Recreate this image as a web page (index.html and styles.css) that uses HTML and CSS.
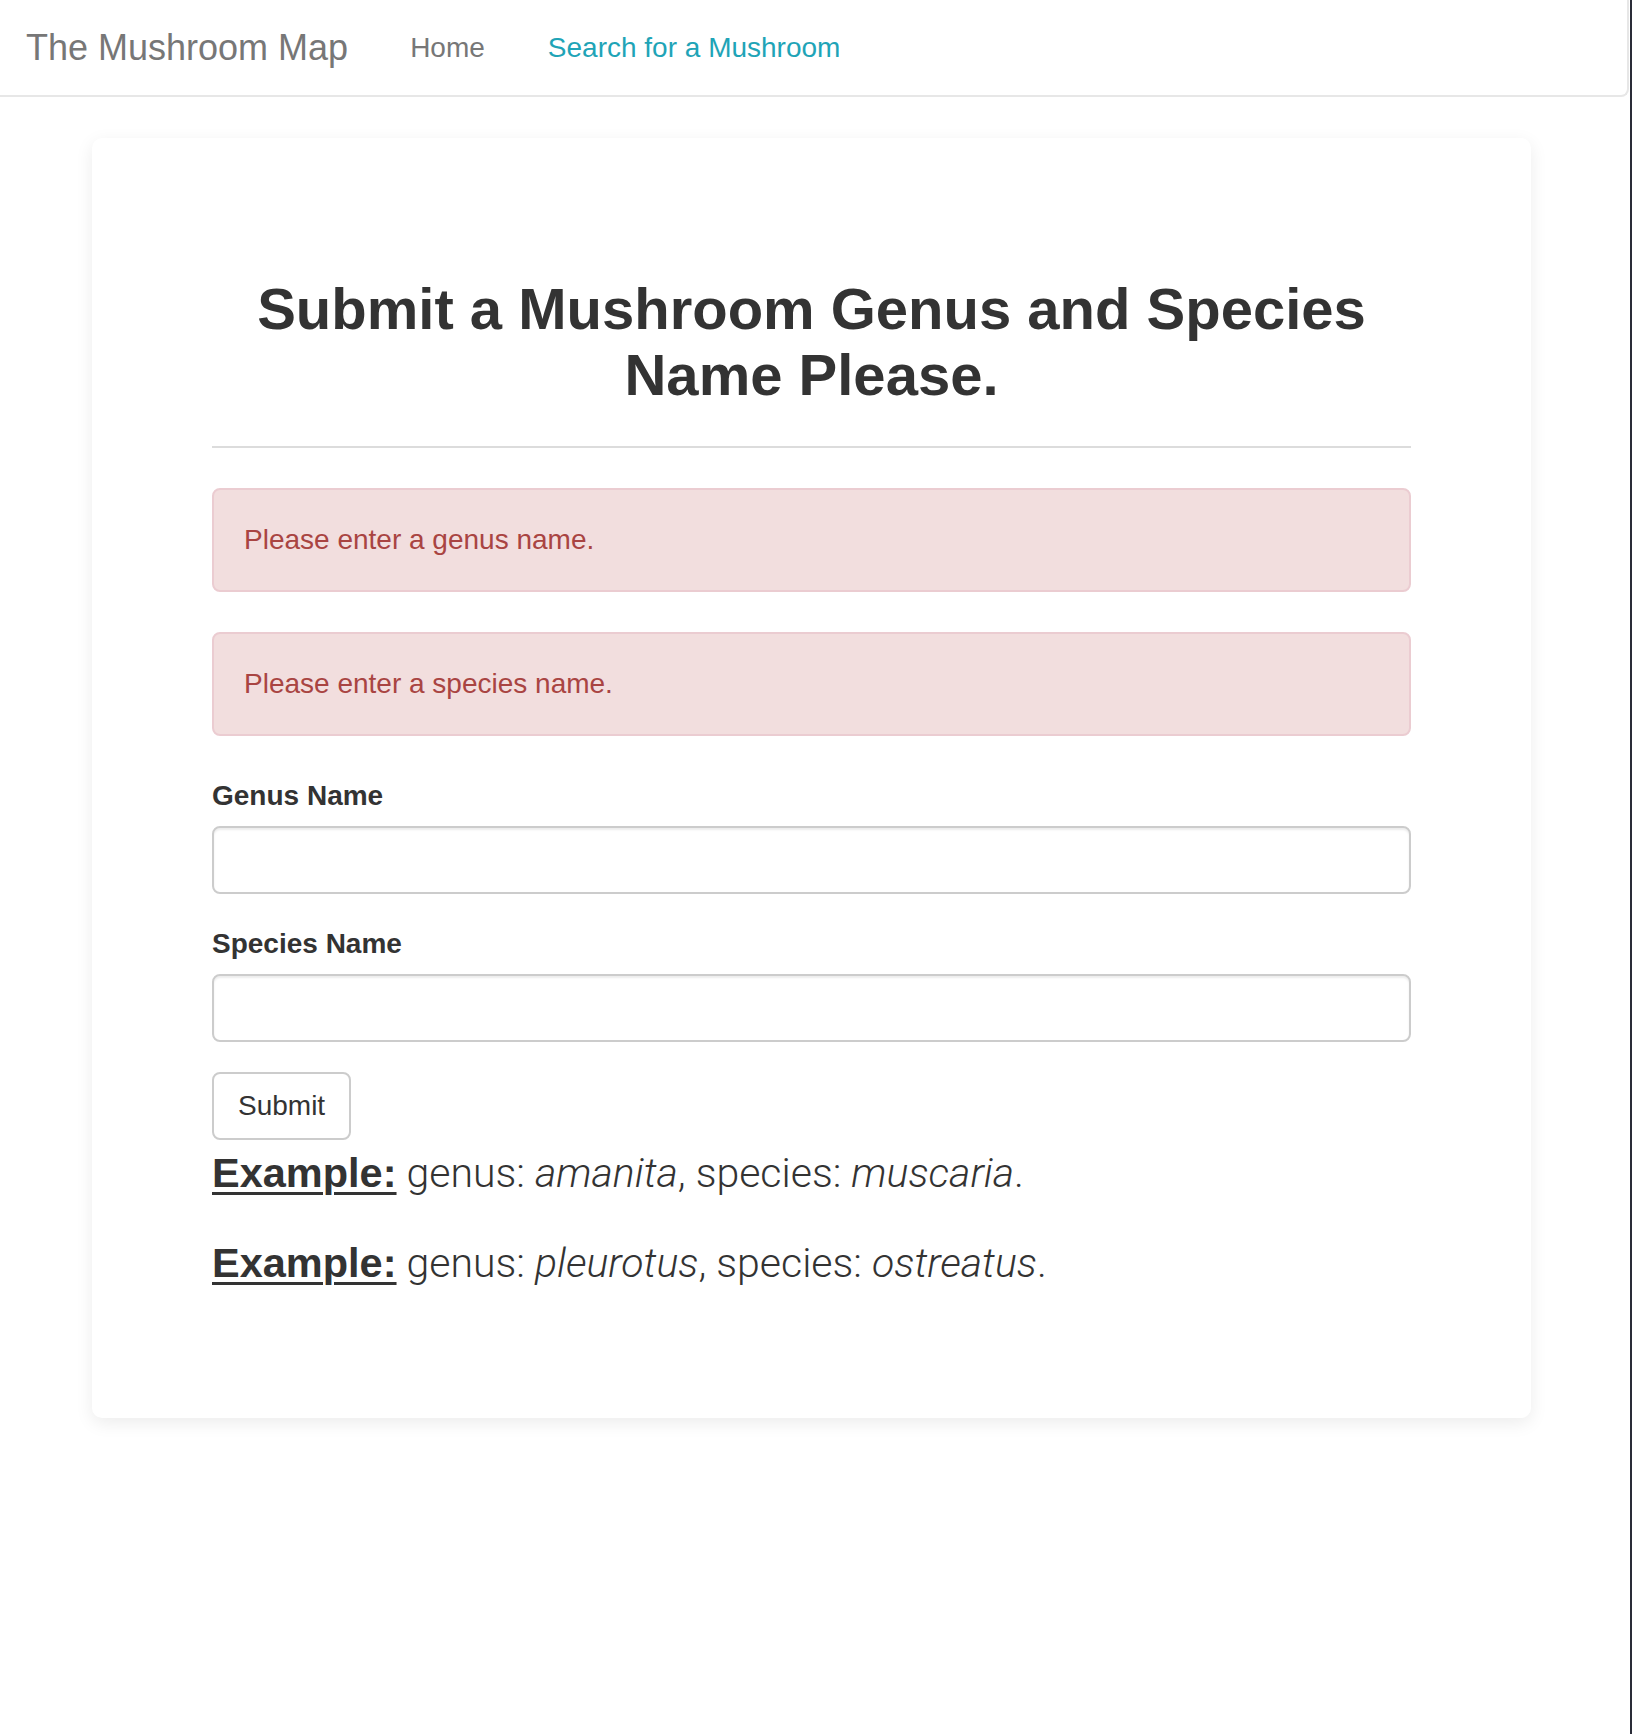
FILE: index.html
```html
<!DOCTYPE html>
<html lang="en">
<head>
<meta charset="utf-8">
<title>The Mushroom Map</title>
<link rel="stylesheet" href="styles.css">
</head>
<body>
<nav class="navbar">
  <a class="brand" href="#">The Mushroom Map</a>
  <ul class="nav-links">
    <li><a class="nav-link" href="#">Home</a></li>
    <li><a class="nav-link active" href="#">Search for a Mushroom</a></li>
  </ul>
</nav>
<main class="page">
  <section class="card">
    <h1 class="title">Submit a Mushroom Genus and Species Name Please.</h1>
    <hr class="rule">
    <div class="alert">Please enter a genus name.</div>
    <div class="alert">Please enter a species name.</div>
    <form class="form">
      <div class="form-group">
        <label class="label" for="genus">Genus Name</label>
        <input class="input" id="genus" type="text">
      </div>
      <div class="form-group">
        <label class="label" for="species">Species Name</label>
        <input class="input" id="species" type="text">
      </div>
      <button class="btn" type="button">Submit</button>
    </form>
    <p class="lead"><u class="ex-label">Example:</u> genus: <i>amanita</i>, species: <i>muscaria</i>.</p>
    <p class="lead"><u class="ex-label">Example:</u> genus: <i>pleurotus</i>, species: <i>ostreatus</i>.</p>
  </section>
</main>
</body>
</html>
```
FILE: styles.css
```css
* { box-sizing: border-box; }
html { background: #fff; }
body {
  margin: 0;
  min-height: 100vh;
  background: #fff;
  border-right: 2px solid #2a2c38;
  font-family: "Liberation Sans", Arial, sans-serif;
  font-size: 28px;
  line-height: 40px;
  color: #333;
}
.navbar {
  height: 97px;
  display: flex;
  align-items: center;
  border-bottom: 2px solid #e7e7e7;
  border-right: 2px solid #e7e7e7;
  border-bottom-right-radius: 8px;
  margin-right: 1px;
}
.brand {
  padding: 0 30px 0 26px;
  font-size: 36px;
  line-height: 40px;
  color: #777;
  text-decoration: none;
}
.nav-links {
  display: flex;
  list-style: none;
  margin: 0;
  padding: 0;
}
.nav-link {
  display: block;
  padding: 0 31px 0 32px;
  color: #777;
  text-decoration: none;
  line-height: 40px;
}
.nav-link.active { color: #1fa4b7; }
.page {
  padding: 41px 0 0 92px;
}
.card {
  width: 1439px;
  background: #fff;
  border-radius: 10px;
  box-shadow: 0 5px 18px rgba(0, 0, 0, 0.08);
  padding: 138px 120px 93px;
}
.title {
  margin: 0;
  text-align: center;
  font-size: 58px;
  line-height: 66px;
  font-weight: bold;
  color: #333;
}
.rule {
  margin: 38px 0 40px;
  border: 0;
  border-top: 2px solid #dcdcdc;
  height: 0;
}
.alert {
  background: #f2dede;
  border: 2px solid #ebccd1;
  border-radius: 8px;
  color: #a94442;
  padding: 30px 30px;
  margin-bottom: 40px;
}
.form-group { margin-bottom: 30px; }
.label {
  display: block;
  font-weight: bold;
  margin-bottom: 10px;
}
.input {
  display: block;
  width: 100%;
  height: 68px;
  border: 2px solid #ccc;
  border-radius: 8px;
  box-shadow: inset 0 2px 2px rgba(0, 0, 0, 0.075);
  font: inherit;
  padding: 12px 24px;
  background: #fff;
}
.btn {
  display: block;
  height: 68px;
  padding: 12px 24px;
  border: 2px solid #ccc;
  border-radius: 8px;
  background: #fff;
  color: #333;
  font: inherit;
  line-height: 40px;
}
.lead {
  margin: 5px 0 34px;
  font-family: Roboto, "Liberation Sans", Arial, sans-serif;
  font-weight: 300;
  font-size: 41px;
  line-height: 56px;
  color: #333;
}
.lead + .lead { margin-top: 0; }
.ex-label {
  font-family: "Liberation Sans", Arial, sans-serif;
  font-weight: bold;
  font-size: 41.5px;
  text-decoration-thickness: 3px;
  text-underline-offset: 5px;
}
```
